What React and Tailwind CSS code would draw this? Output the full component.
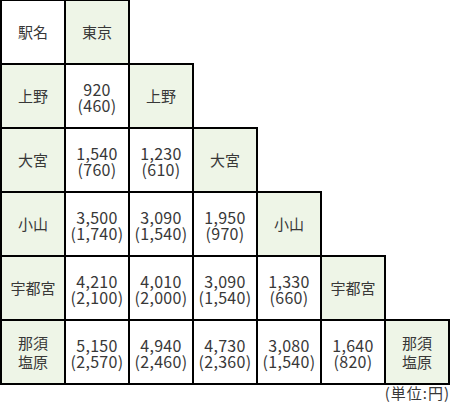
import React from 'react';

// 駅と運賃（大人・小児）
const stations = ['東京', '上野', '大宮', '小山', '宇都宮', '那須塩原'];

const fares = [
    [],
    [['920', '460']],
    [['1,540', '760'], ['1,230', '610']],
    [['3,500', '1,740'], ['3,090', '1,540'], ['1,950', '970']],
    [['4,210', '2,100'], ['4,010', '2,000'], ['3,090', '1,540'], ['1,330', '660']],
    [['5,150', '2,570'], ['4,940', '2,460'], ['4,730', '2,360'], ['3,080', '1,540'], ['1,640', '820']],
];

const StationName = ({ name }) => {
    if (name === '那須塩原') {
        return (
            <span className="leading-[19px]">
                那須<br />塩原
            </span>
        );
    }
    return <span>{name}</span>;
};

const Cell = ({ green, first, children }) => (
    <div
        className={`w-[66px] h-[66px] shrink-0 border-2 border-black flex items-center justify-center text-center ${first ? '' : '-ml-0.5'} ${green ? 'bg-[#eef5e7]' : 'bg-white'}`}
    >
        {children}
    </div>
);

const App = () => {
    return (
        <div
            className="w-[450px] h-[409px] bg-white text-[#383838] text-[15px] overflow-hidden"
            style={{ fontFamily: '"Noto Sans CJK JP", "Noto Sans", sans-serif' }}
        >
            <div className="flex flex-col -mt-px">
                {stations.map((name, r) => (
                    <div key={name} className={`flex ${r === 0 ? '' : '-mt-0.5'}`}>
                        {r === 0 ? (
                            <Cell first>駅名</Cell>
                        ) : (
                            <Cell green first>
                                <StationName name={name} />
                            </Cell>
                        )}
                        {fares[r].map(([adult, child], c) => (
                            <Cell key={c}>
                                <span className="text-[16px] leading-[16px] tracking-[0.02em] pt-px">
                                    {adult}
                                    <br />({child})
                                </span>
                            </Cell>
                        ))}
                        <Cell green>
                            <StationName name={name} />
                        </Cell>
                    </div>
                ))}
            </div>
            <div className="flex justify-end leading-[16px] tracking-[1px]">
                (単位:円)
            </div>
        </div>
    );
};

export default App;
